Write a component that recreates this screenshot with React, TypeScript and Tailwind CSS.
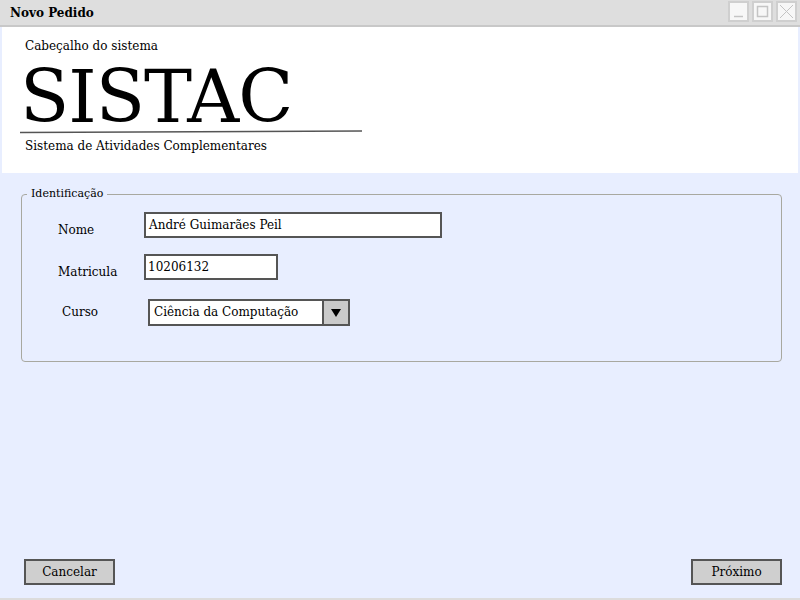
const serif = "font-['DejaVu_Serif',serif]";

function WinButton({ kind }: { kind: 'min' | 'max' | 'close' }) {
  return (
    <div className="w-[21px] h-[21px] bg-[#f7f7f7] border-2 border-[#cfcfcf] flex items-center justify-center">
      <svg width="15" height="15" viewBox="0 0 15 15" fill="none" stroke="#c4c4c4" strokeWidth="1.5">
        {kind === 'min' && <path d="M3 12.5h9" />}
        {kind === 'max' && <rect x="2.5" y="2.5" width="10" height="10" />}
        {kind === 'close' && <path d="M1 1l13 13M14 1L1 14" strokeWidth="1" />}
      </svg>
    </div>
  );
}

function Field({ label, labelClass, className = '', children }: { label: string; labelClass: string; className?: string; children: React.ReactNode }) {
  return (
    <div className={`flex items-center ${className}`}>
      <span className={`text-[12px] text-black w-[86px] ${labelClass}`}>{label}</span>
      {children}
    </div>
  );
}

export default function App() {
  return (
    <div className={`w-[800px] h-[600px] flex flex-col bg-[#e8eeff] ${serif} overflow-hidden`}>
      {/* title bar */}
      <div className="h-[27px] shrink-0 bg-[#dedede] border-b-2 border-[#c8c8c8] flex items-center justify-between pl-[10px] pr-[3px]">
        <span className="text-[12px] font-bold text-black">Novo Pedido</span>
        <div className="flex gap-[3px] -mt-[2px]">
          <WinButton kind="min" />
          <WinButton kind="max" />
          <WinButton kind="close" />
        </div>
      </div>

      <div className="flex-1 flex flex-col px-[2px] pb-[2px] border-b-2 border-[#dcdcdc]">
        {/* header */}
        <div className="h-[146px] shrink-0 bg-white pl-[23px] pt-[10px]">
          <div className="text-[12px] leading-[18px] text-black">Cabeçalho do sistema</div>
          <div className="text-[72px] leading-[66px] text-black -ml-[5px] mt-[9px] tracking-[-1px]">SISTAC</div>
          <svg width="345" height="4" className="-ml-[5px] block">
            <path d="M0 2.5 L342 1" stroke="#555" strokeWidth="1.5" />
          </svg>
          <div className="text-[12px] leading-[18px] text-black mt-[3px]">Sistema de Atividades Complementares</div>
        </div>

        {/* body */}
        <div className="flex-1 flex flex-col pl-[19px] pr-[16px] pt-[13px] pb-[11px]">
          <fieldset className="h-[176px] border border-[#a8a8a0] rounded-[4px] px-[5px] pb-0">
            <legend className="text-[11px] text-black px-[4px]">Identificação</legend>
            <div className="flex flex-col pt-[8px] pl-[31px]">
              <Field label="Nome" labelClass="mt-[10px]">
                <div className="w-[298px] h-[26px] bg-white border-2 border-[#555] flex items-center px-[3px] text-[12px] text-black">
                  André Guimarães Peil
                </div>
              </Field>
              <div className="h-[14px]" />
              <Field label="Matricula" labelClass="mt-[10px]">
                <div className="w-[134px] h-[26px] bg-white border-2 border-[#555] flex items-center px-[2px] text-[12px] text-black">
                  10206132
                </div>
              </Field>
              <div className="h-[18px]" />
              <Field label="Curso" labelClass="" className="ml-[4px]">
                <div className="w-[202px] h-[27px] bg-white border-2 border-[#555] flex items-center text-[12px] text-black">
                  <span className="flex-1 pl-[4px]">Ciência da Computação</span>
                  <div className="w-[26px] h-full bg-[#cacaca] border-l-2 border-[#555] flex items-center justify-center">
                    <svg width="10" height="9" viewBox="0 0 10 9">
                      <path d="M0 1h10L5 9z" fill="#000" />
                    </svg>
                  </div>
                </div>
              </Field>
            </div>
          </fieldset>

          <div className="flex-1" />

          <div className="flex justify-between pl-[3px]">
            <button className="w-[91px] h-[26px] bg-[#cfcfcf] border-2 border-[#555] text-[12px] text-black">Cancelar</button>
            <button className="w-[91px] h-[26px] bg-[#cfcfcf] border-2 border-[#555] text-[12px] text-black">Próximo</button>
          </div>
        </div>
      </div>
    </div>
  );
}
